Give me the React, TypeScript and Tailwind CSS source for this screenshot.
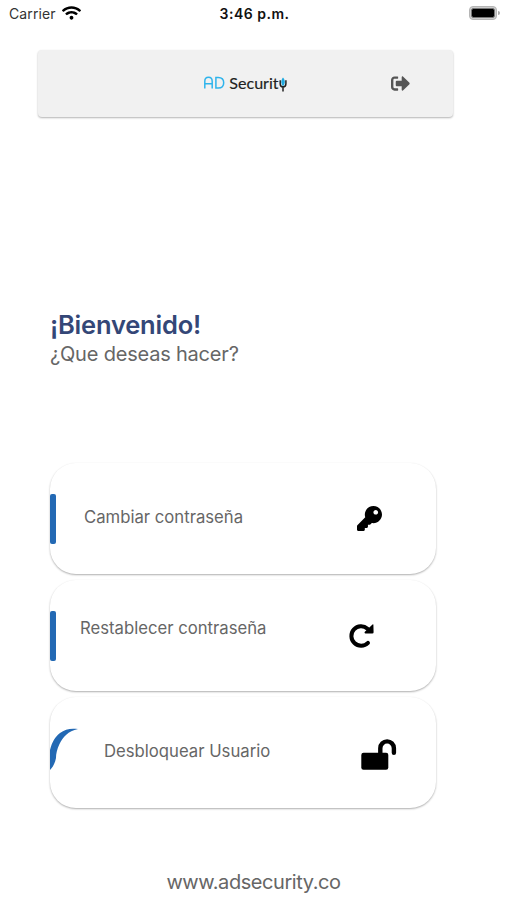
import type { ReactNode } from "react";
import { FaKey, FaSignOutAlt, FaWifi } from "react-icons/fa";

function StatusBar() {
  return (
    <div className="grid h-[27px] grid-cols-3 items-center pr-[7px] pl-[9px] text-[#111]">
      <div className="flex items-center gap-[6px]">
        <span className="text-[14px] tracking-[0.1px] text-[#333]">Carrier</span>
        <FaWifi className="mb-[2px] h-[16px] w-[19px] text-black" />
      </div>
      <span className="text-center text-[14px] font-semibold tracking-[0.5px] whitespace-nowrap">3:46 p.m.</span>
      <div className="mb-px flex items-center justify-end gap-px">
        <div className="h-[14px] w-[28px] rounded-[4px] border border-[#b5b5b5] bg-[#ccc] p-px">
          <div className="h-full rounded-[2.5px] border border-[#777] bg-black" />
        </div>
        <div className="h-[4px] w-[2px] rounded-r-full bg-[#aaa]" />
      </div>
    </div>
  );
}

function Logo() {
  return (
    <svg viewBox="0 0 86 28" className="h-[28px] w-[86px] overflow-visible" fill="none">
      <path d="M1.8 18.5V11.2C1.8 8.7 3.4 7.2 5.5 7.2S9.2 8.7 9.2 11.2V18.5M1.8 13.7H9.2" stroke="#2fb4ec" strokeWidth="1.5" />
      <path d="M12.9 7.4H15.3C18.8 7.4 20.7 9.6 20.7 12.7S18.8 18 15.3 18H12.9Z" stroke="#2fb4ec" strokeWidth="1.5" />
      <text x="26.3" y="18.6" fontFamily="Lato, sans-serif" fontSize="15.5" fill="#222" stroke="#222" strokeWidth="0.15" textLength="49.3" lengthAdjust="spacingAndGlyphs">Securit</text>
      <path d="M77.2 10.2V13.8C77.2 16.2 78.4 17 80 17S82.9 16.2 82.9 13.8V10.2M80 16V21.5" stroke="#222" strokeWidth="1.5" />
      <path d="M80 7.6C77.6 10.4 77.8 13.8 80 16.2C82.3 13.8 82.5 10.4 80 7.6Z" fill="#20a9df" />
    </svg>
  );
}

function RedoIcon() {
  return (
    <svg viewBox="0 0 26 26" className="mt-[42px] size-[26px] shrink-0" fill="none">
      <path d="M18.5 6.7A9.7 9.7 0 1 0 19 20.8" stroke="#000" strokeWidth="4" strokeLinecap="round" />
      <path d="M24.4 3Q24.4 1.8 23.5 2.6L15.6 10Q15.2 11.4 16.4 11.4H23.3Q24.6 11.4 24.6 10.2Z" fill="#000" />
    </svg>
  );
}

function OpenLockIcon() {
  return (
    <svg viewBox="0 0 36 32" className="mt-[42px] h-[32px] w-[36px] shrink-0" fill="none">
      <rect x="0.3" y="13.7" width="27" height="17" rx="2.2" fill="#000" />
      <path d="M19.3 15V9.2A6.8 6.8 0 0 1 32.9 9.2V13.8" stroke="#000" strokeWidth="4.4" strokeLinecap="round" />
    </svg>
  );
}

function ActionCard({ children }: { children: ReactNode }) {
  return (
    <button className="flex h-[111px] w-[386px] items-start overflow-hidden rounded-[26px] bg-white text-left shadow-[0_1px_2px_rgba(0,0,0,0.32)]">
      {children}
    </button>
  );
}

function Accent() {
  return <span className="mt-[31px] h-[50px] w-[6px] shrink-0 rounded-[2px] bg-[#2369b4]" />;
}

export default function App() {
  return (
    <div className="h-[900px] w-[507px] overflow-hidden bg-white font-['Inter','Liberation_Sans',sans-serif]">
      <StatusBar />
      <header className="mt-[23px] ml-[38px] flex h-[67px] w-[415px] items-center rounded-[4px] bg-[#f1f1f1] pl-[165px] shadow-[0_1px_2px_rgba(0,0,0,0.3)]">
        <Logo />
        <FaSignOutAlt className="mb-px ml-[102px] size-[19px] text-[#555]" />
      </header>
      <main className="pl-[50px]">
        <h1 className="mt-[193px] h-[31px] text-[25.5px] leading-[30px] font-semibold tracking-[-0.2px] text-[#344777]">¡Bienvenido!</h1>
        <p className="h-[26px] text-[20px] leading-[26px] tracking-[-0.2px] text-[#666]">¿Que deseas hacer?</p>
        <div className="mt-[96px] flex flex-col gap-[6px] text-[16.7px] leading-[20px] text-[#666]">
          <ActionCard>
            <Accent />
            <span className="mt-[44px] ml-[28px] w-[273px] shrink-0">Cambiar contraseña</span>
            <FaKey className="mt-[43px] size-[25px] text-black" />
          </ActionCard>
          <ActionCard>
            <Accent />
            <span className="mt-[38px] ml-[24px] w-[269px] shrink-0">Restablecer contraseña</span>
            <RedoIcon />
          </ActionCard>
          <ActionCard>
            <svg className="mt-[31px] h-[43px] w-[28px] shrink-0" viewBox="0 0 28 43" fill="#2369b4">
              <path d="M0 42V22C2 14 5 9 10 5C15 1 21 0 28 1C18 3 13 9 9.5 16C7 21 6 26 6 30C5 35 3 39 0 42Z" />
            </svg>
            <span className="mt-[44px] ml-[26px] w-[257px] shrink-0">Desbloquear Usuario</span>
            <OpenLockIcon />
          </ActionCard>
        </div>
      </main>
      <footer className="mt-[61px] text-center text-[20px] leading-[26px] tracking-[-0.43px] text-[#666]">www.adsecurity.co</footer>
    </div>
  );
}
